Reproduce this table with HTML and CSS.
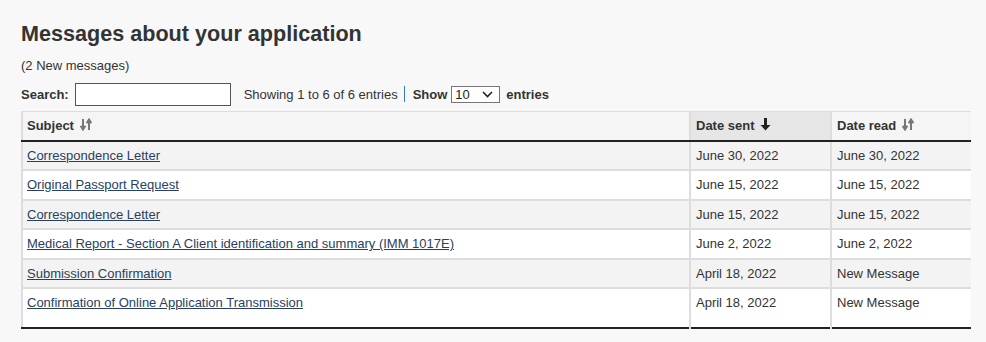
FILE: index.html
```html
<!DOCTYPE html>
<html lang="en">
<head>
  <meta charset="UTF-8">
  <meta name="viewport" content="width=device-width, initial-scale=1.0">
  <title>Messages about your application</title>
  <link rel="stylesheet" href="styles.css">
</head>
<body>
  <main class="page">
    <h1>Messages about your application</h1>
    <p class="new-count">(2 New messages)</p>

    <!-- search + paging info -->
    <div class="toolbar">
      <label class="bold" for="search">Search:</label>
      <input id="search" class="search-box" type="text">
      <span class="info">Showing 1 to 6 of 6 entries</span>
      <span class="sep"></span>
      <label class="bold" for="length">Show</label>
      <span class="length-wrap">
        <select id="length" class="length">
          <option>10</option>
          <option>25</option>
          <option>50</option>
        </select>
        <svg class="chevron" width="11" height="7" viewBox="0 0 11 7"><path d="M1 1l4.5 4.5L10 1" fill="none" stroke="#222" stroke-width="1.6"/></svg>
      </span>
      <span class="bold">entries</span>
    </div>

    <table class="messages">
      <thead>
        <tr>
          <th class="col-subject">Subject
            <svg class="sort" width="12" height="13" viewBox="0 0 12 13"><path d="M3 1v9M0.6 7.8L3 11.5l2.4-3.7M9 12V3M6.6 5.2L9 1.5l2.4 3.7" fill="none" stroke="#777" stroke-width="2"/></svg>
          </th>
          <th class="col-date sorted">Date sent
            <svg class="sort" width="11" height="13" viewBox="0 0 11 13"><path d="M4 0h3v7h3.5L5.5 12.5 0.5 7H4z" fill="#222"/></svg>
          </th>
          <th class="col-date">Date read
            <svg class="sort" width="12" height="13" viewBox="0 0 12 13"><path d="M3 1v9M0.6 7.8L3 11.5l2.4-3.7M9 12V3M6.6 5.2L9 1.5l2.4 3.7" fill="none" stroke="#777" stroke-width="2"/></svg>
          </th>
        </tr>
      </thead>
      <tbody>
        <tr>
          <td><a href="#">Correspondence Letter</a></td>
          <td>June 30, 2022</td>
          <td>June 30, 2022</td>
        </tr>
        <tr>
          <td><a href="#">Original Passport Request</a></td>
          <td>June 15, 2022</td>
          <td>June 15, 2022</td>
        </tr>
        <tr>
          <td><a href="#">Correspondence Letter</a></td>
          <td>June 15, 2022</td>
          <td>June 15, 2022</td>
        </tr>
        <tr>
          <td><a href="#">Medical Report - Section A Client identification and summary (IMM 1017E)</a></td>
          <td>June 2, 2022</td>
          <td>June 2, 2022</td>
        </tr>
        <tr>
          <td><a href="#">Submission Confirmation</a></td>
          <td>April 18, 2022</td>
          <td>New Message</td>
        </tr>
        <tr class="last">
          <td><a href="#">Confirmation of Online Application Transmission</a></td>
          <td>April 18, 2022</td>
          <td>New Message</td>
        </tr>
      </tbody>
    </table>
  </main>
</body>
</html>
```

FILE: styles.css
```css
body {
  margin: 0;
  background: #f8f8f8;
  color: #333;
  font-family: "Liberation Sans", Arial, sans-serif;
  font-size: 13px;
}

.page {
  padding: 21px 15px 0 21px;
}

h1 {
  font-size: 21.6px;
  font-weight: bold;
  line-height: 26px;
  margin: 0 0 10px;
  color: #333;
}

.new-count {
  margin: 0 0 7px;
  line-height: 18px;
}

.toolbar {
  display: flex;
  align-items: center;
  height: 24px;
  margin-bottom: 5px;
}

.bold {
  font-weight: bold;
}

.search-box {
  width: 156px;
  height: 23px;
  box-sizing: border-box;
  margin: 0 13px 0 6px;
  border: 1px solid #555;
  background: #fff;
  padding: 2px 4px;
  font: inherit;
}

.sep {
  width: 0;
  height: 16px;
  border-left: 1px solid #2f7fc4;
  margin: 0 8px 0 6px;
}

.length-wrap {
  position: relative;
  display: inline-flex;
  margin: 0 6px 0 4px;
}

.length {
  -webkit-appearance: none;
  appearance: none;
  width: 49px;
  height: 17px;
  box-sizing: border-box;
  border: 1px solid #767676;
  border-radius: 0;
  background: #fff;
  color: #222;
  font: inherit;
  padding: 0 0 0 3px;
  line-height: 15px;
}

.chevron {
  position: absolute;
  right: 7px;
  top: 5px;
  pointer-events: none;
}

.messages {
  width: 950px;
  border-collapse: collapse;
  border-top: 1px solid #ddd;
  border-left: 2px solid #ddd;
  border-bottom: 2px solid #222;
}

.messages th,
.messages td {
  text-align: left;
  padding: 4px 5px;
  line-height: 19.5px;
  border-right: 2px solid #ddd;
  border-top: 2px solid #ddd;
}

.messages th:first-child,
.messages td:first-child {
  padding-left: 4px;
}

.messages th:last-child,
.messages td:last-child {
  border-right: none;
}

.messages th {
  background: #f5f5f5;
  border-top: none;
  border-bottom: 2px solid #222;
  padding-top: 4px;
  padding-bottom: 4px;
}

.messages th.sorted {
  background: #e6e6e6;
}

.col-date {
  width: 129px;
}

.sort {
  vertical-align: -1px;
  margin-left: 2px;
}

.messages tbody tr:nth-child(odd) {
  background: #f3f3f3;
}

.messages tbody tr:nth-child(even) {
  background: #fff;
}

.messages tr.last td {
  padding-bottom: 14px;
}

.messages a {
  color: #284162;
}
```
